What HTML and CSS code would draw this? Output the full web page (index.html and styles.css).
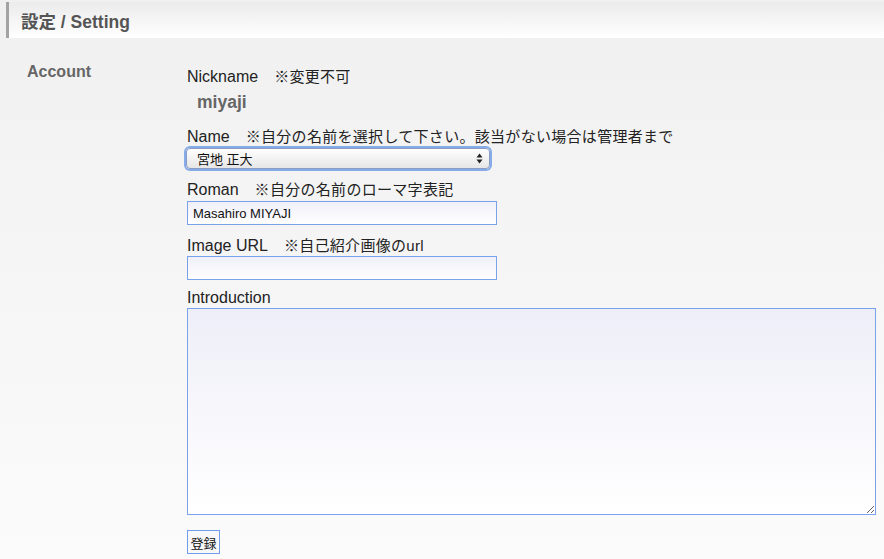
FILE: index.html
```html
<!DOCTYPE html>
<html lang="ja">
<head>
<meta charset="utf-8">
<title>設定 / Setting</title>
<link rel="stylesheet" href="styles.css">
</head>
<body>
<header class="page-head">設定 / Setting</header>
<main class="content">
  <div class="section-title">Account</div>
  <form class="form">
    <div class="label">Nickname<span class="note">※変更不可</span></div>
    <div class="nick">miyaji</div>
    <div class="label gap-name">Name<span class="note">※自分の名前を選択して下さい。該当がない場合は管理者まで</span></div>
    <div class="select">
      <span class="select-text">宮地 正大</span>
      <svg class="select-arrows" width="7" height="11" viewBox="0 0 7 11"><path d="M3.5 0.5L6.5 4.5H0.5Z" fill="#222"/><path d="M3.5 10.5L6.5 6.5H0.5Z" fill="#222"/></svg>
    </div>
    <div class="label gap-roman">Roman<span class="note">※自分の名前のローマ字表記</span></div>
    <input class="text-input gap-2" type="text" value="Masahiro MIYAJI">
    <div class="label gap-roman">Image URL<span class="note">※自己紹介画像のurl</span></div>
    <input class="text-input gap-1" type="text" value="">
    <div class="label gap-intro">Introduction</div>
    <textarea class="intro gap-1"></textarea>
    <button class="submit" type="button">登録</button>
  </form>
</main>
</body>
</html>
```
FILE: styles.css
```css
html, body {
  margin: 0;
  padding: 0;
}
body {
  min-height: 559px;
  background: linear-gradient(#f0f0f0, #fbfbfb);
  font-family: "Liberation Sans", "Noto Sans CJK JP", sans-serif;
  color: #222;
  overflow: hidden;
}
.page-head {
  margin: 2px 0 0 6px;
  height: 34px;
  padding-top: 2px;
  line-height: 36px;
  border-left: 3px solid #a3a3a3;
  padding-left: 12px;
  background: linear-gradient(#ebebeb, #ffffff);
  font-size: 17.5px;
  font-weight: bold;
  color: #555;
}
.content {
  display: grid;
  grid-template-columns: 187px 1fr;
  padding-top: 25px;
  padding-right: 8px;
}
.section-title {
  padding-left: 27px;
  font-size: 16px;
  line-height: 18px;
  font-weight: bold;
  color: #666;
}
.form {
  display: flex;
  flex-direction: column;
  align-items: flex-start;
  padding-top: 5px;
}
.label {
  font-size: 16px;
  line-height: 18px;
  color: #222;
  white-space: nowrap;
}
.note {
  margin-left: 16px;
  font-size: 15px;
  letter-spacing: 0.3px;
}
.nick {
  margin: 6px 0 0 10px;
  font-size: 17.5px;
  line-height: 20px;
  font-weight: bold;
  color: #666;
}
.gap-name { margin-top: 16px; }
.gap-roman { margin-top: 12px; }
.gap-intro { margin-top: 9px; }
.gap-1 { margin-top: 1px; }
.gap-2 { margin-top: 2px; }
.select {
  margin: 2px 0 0 -1px;
  box-sizing: border-box;
  width: 304px;
  height: 21px;
  display: flex;
  align-items: center;
  justify-content: space-between;
  padding: 0 6px 0 10px;
  border: 1px solid #8a9cc4;
  border-radius: 4px;
  background: linear-gradient(#ffffff, #e6e6e6);
  box-shadow: 0 0 0 2px #85abe8;
}
.select-text {
  font-size: 13px;
  color: #111;
}
.select-arrows {
  display: block;
}
.text-input {
  box-sizing: border-box;
  width: 310px;
  height: 24px;
  margin-bottom: 0;
  border: 1px solid #7aa2ea;
  border-radius: 0;
  padding: 0 5px;
  background: linear-gradient(#efeff9, #ffffff);
  font-family: "Liberation Sans", "Noto Sans CJK JP", sans-serif;
  font-size: 13px;
  color: #111;
  outline: none;
}
.intro {
  box-sizing: border-box;
  width: 689px;
  height: 207px;
  border: 1px solid #7aa2ea;
  border-radius: 0;
  padding: 2px;
  background: linear-gradient(#eeeef8, #ffffff);
  outline: none;
  resize: both;
}
.submit {
  margin-top: 15px;
  box-sizing: border-box;
  width: 33px;
  height: 24px;
  padding: 0;
  border: 1px solid #6f9de8;
  border-radius: 0;
  background: #f8f8fa;
  font-family: "Noto Sans CJK JP", sans-serif;
  font-size: 13px;
  color: #111;
}
```
